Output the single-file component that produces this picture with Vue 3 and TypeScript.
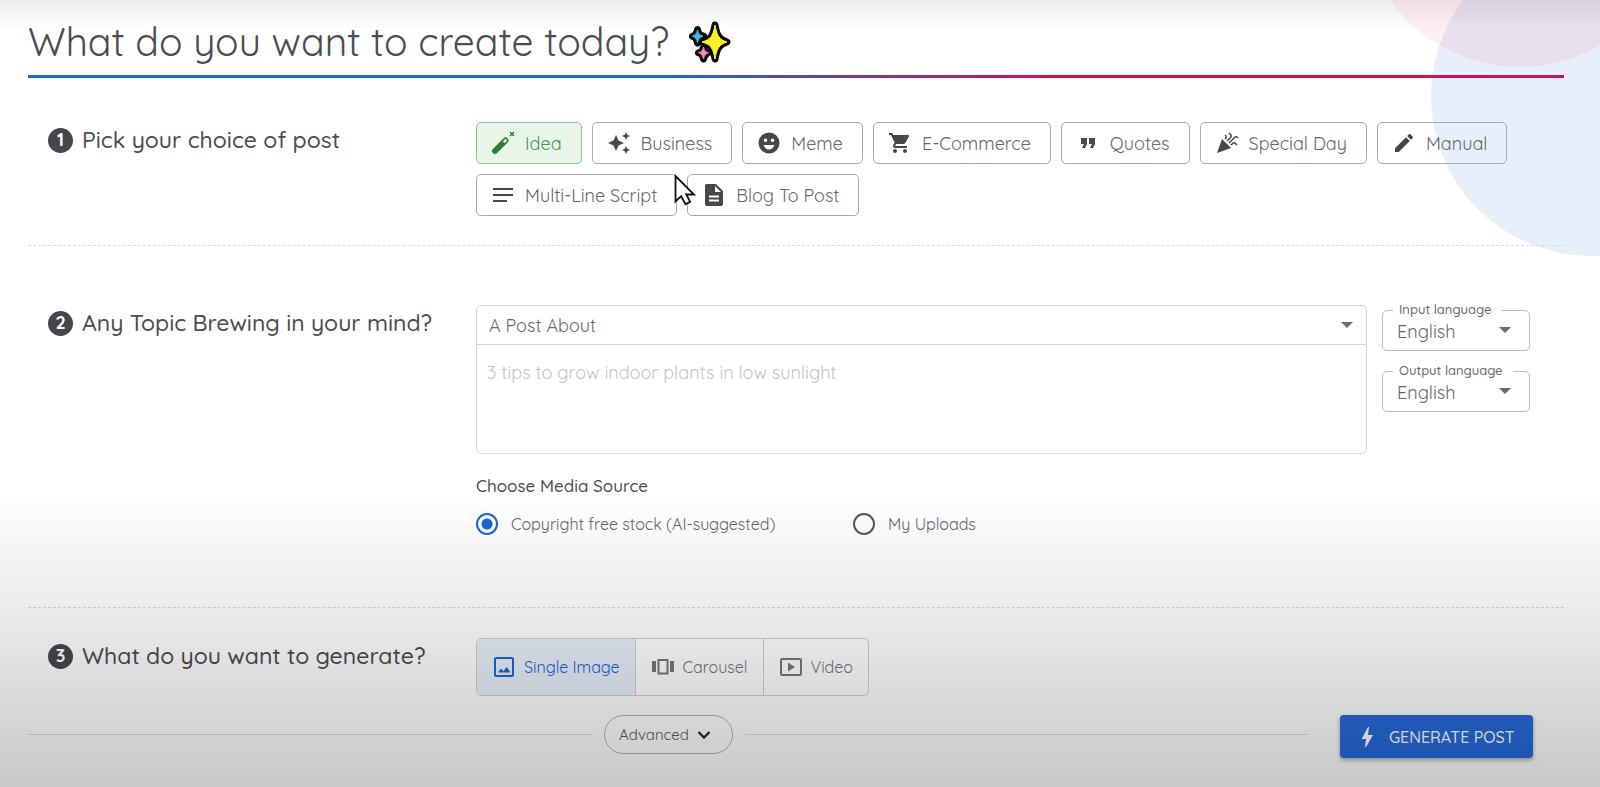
<script setup lang="ts">
import { ref } from 'vue'

interface PostType {
  id: string
  label: string
  paths: string[]
}

const postTypes: PostType[] = [
  { id: 'idea', label: 'Idea', paths: [] },
  {
    id: 'business',
    label: 'Business',
    paths: [
      'M19 9l1.25-2.75L23 5l-2.75-1.25L19 1l-1.25 2.75L15 5l2.75 1.25zM11.5 9.5L9 4 6.5 9.5 1 12l5.5 2.5L9 20l2.5-5.5L17 12zM19 15l-1.25 2.75L15 19l2.75 1.25L19 23l1.25-2.75L23 19l-2.75-1.25z',
    ],
  },
  {
    id: 'meme',
    label: 'Meme',
    paths: [
      'M12 1.5a10.5 10.5 0 1 0 0 21a10.5 10.5 0 1 0 0-21zM8.5 7.5a1.7 1.7 0 0 1 0 3.5a1.7 1.7 0 0 1 0-3.5zM15.5 7.5a1.7 1.7 0 0 1 0 3.5a1.7 1.7 0 0 1 0-3.5zM12 18.5c-2.5 0-4.6-1.8-5.5-4.5h11c-.9 2.7-3 4.5-5.5 4.5z',
    ],
  },
  {
    id: 'ecommerce',
    label: 'E-Commerce',
    paths: [
      'M7 18c-1.1 0-1.99.9-1.99 2S5.9 22 7 22s2-.9 2-2-.9-2-2-2zM1 2v2h2l3.6 7.59-1.35 2.45c-.16.28-.25.61-.25.96 0 1.1.9 2 2 2h12v-2H7.42c-.14 0-.25-.11-.25-.25l.03-.12.9-1.63h7.45c.75 0 1.41-.41 1.75-1.03l3.58-6.49c.08-.14.12-.31.12-.48 0-.55-.45-1-1-1H5.21l-.94-2H1zm16 16c-1.1 0-1.99.9-1.99 2s.89 2 1.99 2 2-.9 2-2-.9-2-2-2z',
    ],
  },
  { id: 'quotes', label: 'Quotes', paths: ['M6 17h3l2-4V7H5v6h3zM14 17h3l2-4V7h-6v6h3z'] },
  {
    id: 'special',
    label: 'Special Day',
    paths: [
      'M2 22l14-5-9-9z',
      'M14.53 12.53l5.59-5.59c.49-.49 1.28-.49 1.77 0l.59.59 1.06-1.06-.59-.59c-1.07-1.07-2.82-1.07-3.89 0l-5.59 5.59 1.06 1.06zM10.06 6.88l-.59.59 1.06 1.06.59-.59c1.07-1.07 1.07-2.82 0-3.89l-.59-.59-1.06 1.07.59.59c.48.48.48 1.28 0 1.76zM17.06 11.88l-1.59 1.59 1.06 1.06 1.59-1.59c.49-.49 1.28-.49 1.77 0l1.61 1.61 1.06-1.06-1.61-1.61c-1.08-1.07-2.82-1.07-3.89 0zM15.06 5.88l-3.59 3.59 1.06 1.06 3.59-3.59c1.07-1.07 1.07-2.82 0-3.89l-1.59-1.59-1.06 1.06 1.59 1.59c.48.49.48 1.29 0 1.77z',
    ],
  },
  {
    id: 'manual',
    label: 'Manual',
    paths: [
      'M3 17.25V21h3.75L17.81 9.94l-3.75-3.75L3 17.25zM20.71 7.04c.39-.39.39-1.02 0-1.41l-2.34-2.34c-.39-.39-1.02-.39-1.41 0l-1.83 1.83 3.75 3.75 1.83-1.83z',
    ],
  },
  { id: 'multiline', label: 'Multi-Line Script', paths: ['M2 5h20v2H2zM2 11h20v2H2zM2 17h14v2H2z'] },
  {
    id: 'blog',
    label: 'Blog To Post',
    paths: [
      'M14 1H5c-1.1 0-2 .9-2 2v18c0 1.1.9 2 2 2h14c1.1 0 2-.9 2-2V8zM17 18.5H7v-2h10zM17 14.5H7v-2h10zM13 9V3l6 6z',
    ],
  },
]

const languages = ['English', 'Spanish', 'French', 'German']
const sources = [
  { id: 'stock', label: 'Copyright free stock (AI-suggested)' },
  { id: 'uploads', label: 'My Uploads' },
]
const formats = [
  { id: 'image', label: 'Single Image' },
  { id: 'carousel', label: 'Carousel' },
  { id: 'video', label: 'Video' },
]

const postType = ref('idea')
const topicKind = ref('A Post About')
const topic = ref('')
const inputLanguage = ref('English')
const outputLanguage = ref('English')
const source = ref('stock')
const format = ref('image')
</script>

<template>
  <main class="page">
    <div class="backdrop" aria-hidden="true">
      <span class="disc disc-blue"></span>
      <span class="disc disc-pink"></span>
    </div>

    <header class="header">
      <h1>What do you want to create today?</h1>
      <svg class="sparkles" viewBox="0 0 42 42" aria-hidden="true">
        <g stroke="#0a0a0a" stroke-width="7" stroke-linejoin="round" fill="#0a0a0a">
          <path d="M8.5 8.5C9.5 13 10.5 14 14.5 15.2C10.5 16.4 9.5 17.5 8.5 22C7.5 17.5 6.5 16.4 3.5 15.2C6.5 14 7.5 13 8.5 8.5z" />
          <path d="M26 4C28 15.5 30.5 18.5 38 21C30.5 23.5 28 26.5 26 38C24 26.5 21.5 23.5 13 21C21.5 18.5 24 15.5 26 4z" />
          <path d="M14.5 26C15.5 30 16.5 31 19 31.8C16.5 32.7 15.5 34 14.5 38C13.5 34 12.5 32.7 9.5 31.8C12.5 31 13.5 30 14.5 26z" />
        </g>
        <g stroke-width="1" stroke-linejoin="round">
          <path fill="#fff02a" stroke="#fff02a" d="M26 4C28 15.5 30.5 18.5 38 21C30.5 23.5 28 26.5 26 38C24 26.5 21.5 23.5 13 21C21.5 18.5 24 15.5 26 4z" />
          <path fill="#35bde9" stroke="#35bde9" d="M8.5 9C9.5 13 10.5 14 14 15.2C10.5 16.4 9.5 17.5 8.5 21.5C7.5 17.5 6.5 16.4 3.5 15.2C6.5 14 7.5 13 8.5 9z" />
          <path fill="#f58bbd" stroke="#f58bbd" d="M14.5 26C15.5 30 16.5 31 19.5 31.8C16.5 32.7 15.5 34 14.5 38C13.5 34 12.5 32.7 9.5 31.8C12.5 31 13.5 30 14.5 26z" />
        </g>
      </svg>
    </header>

    <section class="step step-post">
      <h2><span class="badge">1</span>Pick your choice of post</h2>
      <div class="chips">
        <button
          v-for="t in postTypes"
          :key="t.id"
          type="button"
          class="chip"
          :class="{ active: postType === t.id }"
          :aria-pressed="postType === t.id"
          @click="postType = t.id"
        >
          <svg viewBox="0 0 24 24" aria-hidden="true">
            <template v-if="t.id === 'idea'">
              <path d="M4 20L14.5 9.5" fill="none" stroke="currentColor" stroke-width="6" stroke-linecap="round" />
              <path d="M13.5 10.5l1.2-1.2" fill="none" stroke="#e8f5e9" stroke-width="2.6" stroke-linecap="round" />
              <path d="M19 1l4 4M23 1l-4 4" fill="none" stroke="currentColor" stroke-width="1.5" />
            </template>
            <path v-for="p in t.paths" :key="p" :d="p" fill="currentColor" fill-rule="evenodd" />
          </svg>
          <span>{{ t.label }}</span>
        </button>
        <svg class="pointer" viewBox="0 0 22 32" aria-hidden="true">
          <path d="M1.5 2v25.5l5.7-5.3 4.3 8 4.6-2.4-3.8-7.3h7.7z" fill="#fff" stroke="#111" stroke-width="1.8" />
        </svg>
      </div>
    </section>

    <section class="step step-topic">
      <h2><span class="badge">2</span>Any Topic Brewing in your mind?</h2>
      <div>
        <div class="topic-row">
          <div class="composer">
            <div class="picker">
              <select v-model="topicKind" aria-label="Topic type">
                <option>A Post About</option>
                <option>A Question About</option>
              </select>
              <svg class="caret" viewBox="0 0 12 6" aria-hidden="true"><path d="M0 0h12L6 6z" fill="currentColor" /></svg>
            </div>
            <textarea v-model="topic" aria-label="Topic" placeholder="3 tips to grow indoor plants in low sunlight"></textarea>
          </div>
          <div class="languages">
            <fieldset>
              <legend><label for="input-language">Input language</label></legend>
              <select id="input-language" v-model="inputLanguage">
                <option v-for="l in languages" :key="l">{{ l }}</option>
              </select>
              <svg class="caret" viewBox="0 0 12 6" aria-hidden="true"><path d="M0 0h12L6 6z" fill="currentColor" /></svg>
            </fieldset>
            <fieldset>
              <legend><label for="output-language">Output language</label></legend>
              <select id="output-language" v-model="outputLanguage">
                <option v-for="l in languages" :key="l">{{ l }}</option>
              </select>
              <svg class="caret" viewBox="0 0 12 6" aria-hidden="true"><path d="M0 0h12L6 6z" fill="currentColor" /></svg>
            </fieldset>
          </div>
        </div>
        <h3 id="media-source">Choose Media Source</h3>
        <div class="sources" role="radiogroup" aria-labelledby="media-source">
          <label v-for="s in sources" :key="s.id">
            <input v-model="source" type="radio" name="source" :value="s.id" />
            <span>{{ s.label }}</span>
          </label>
        </div>
      </div>
    </section>

    <section class="step step-format">
      <h2><span class="badge">3</span>What do you want to generate?</h2>
      <div class="formats">
        <button
          v-for="f in formats"
          :key="f.id"
          type="button"
          :class="{ active: format === f.id }"
          :aria-pressed="format === f.id"
          @click="format = f.id"
        >
          <svg viewBox="0 0 24 24" aria-hidden="true">
            <template v-if="f.id === 'image'">
              <rect x="3" y="3" width="18" height="18" rx="1" fill="none" stroke="currentColor" stroke-width="2" />
              <path d="M6 17.5l3-4 2.5 2.8 3.2-4.5 3.8 5.7z" fill="currentColor" />
            </template>
            <template v-else-if="f.id === 'carousel'">
              <path d="M1 6h4v11H1zM19 6h4v11h-4z" fill="currentColor" />
              <rect x="7.5" y="5" width="9" height="13.5" fill="none" stroke="currentColor" stroke-width="2" />
            </template>
            <template v-else>
              <rect x="2" y="4" width="20" height="16" rx="1" fill="none" stroke="currentColor" stroke-width="2" />
              <path d="M9 7.5v9l7-4.5z" fill="currentColor" />
            </template>
          </svg>
          <span>{{ f.label }}</span>
        </button>
      </div>
    </section>

    <footer class="footer">
      <div class="more">
        <span class="rule"></span>
        <button type="button" class="advanced">
          Advanced
          <svg viewBox="0 0 14 10" aria-hidden="true"><path d="M1.5 2l5.5 5.5L12.5 2" fill="none" stroke="#2b2c2f" stroke-width="2.4" /></svg>
        </button>
        <span class="rule"></span>
      </div>
      <button type="button" class="generate">
        <svg viewBox="0 0 24 24" aria-hidden="true"><path d="M11 22h-1l1-8H6.5l6.5-12h1l-1 8h5z" fill="currentColor" /></svg>
        Generate Post
      </button>
    </footer>
    <div class="shade" aria-hidden="true"></div>
  </main>
</template>

<style>
body {
  margin: 0;
}
</style>

<style scoped>
.page {
  position: relative;
  box-sizing: border-box;
  min-height: 100vh;
  padding: 16px 36px 29px 28px;
  background: #fff;
  color: #4b4d51;
  font-family: Quicksand, Lato, 'Open Sans', sans-serif;
  font-size: 18px;
}

.page *,
.page *::before {
  box-sizing: border-box;
}

.backdrop,
.shade {
  position: absolute;
  inset: 0;
  overflow: hidden;
  pointer-events: none;
}

.shade {
  background:
    linear-gradient(180deg, rgba(0, 0, 0, 0.07), rgba(0, 0, 0, 0) 30px),
    linear-gradient(180deg, rgba(0, 0, 0, 0) 490px, rgba(0, 0, 0, 0.07) 600px, rgba(0, 0, 0, 0.14) 690px, rgba(0, 0, 0, 0.21) 787px);
}

.disc {
  position: absolute;
  width: 320px;
  height: 320px;
  border-radius: 50%;
}

.disc-blue {
  top: -64px;
  right: -151px;
  background: #e8effa;
}

.disc-pink {
  top: -253px;
  right: -80px;
  background: rgba(245, 50, 110, 0.08);
}

.header,
.step,
.footer {
  position: relative;
}

.header {
  display: flex;
  align-items: center;
  gap: 20px;
  height: 62px;
  padding-bottom: 10px;
}

.header::after {
  content: '';
  position: absolute;
  inset: auto 0 0;
  height: 3px;
  background: linear-gradient(90deg, #1b66cf 42%, #c5174c 66%);
}

h1,
h2,
h3 {
  margin: 0;
  font-weight: 500;
}

h1 {
  font-size: 39px;
  line-height: 52px;
  font-weight: 400;
}

.sparkles {
  width: 42px;
  height: 42px;
}

.step {
  display: grid;
  grid-template-columns: 448px minmax(0, 1fr);
}

h2 {
  display: flex;
  align-items: center;
  align-self: start;
  gap: 9px;
  padding: 2px 0 0 20px;
  font-size: 23px;
  line-height: 32px;
}

.badge {
  display: grid;
  place-items: center;
  width: 25px;
  height: 25px;
  border-radius: 50%;
  background: #45474b;
  color: #fff;
  font-size: 18px;
  line-height: 24px;
  font-weight: 700;
}

button,
select,
textarea {
  font: inherit;
  color: inherit;
}

button {
  cursor: pointer;
}

.step-post {
  padding: 44px 0 29px;
  border-bottom: 1px dashed #dadad6;
}

.chips {
  position: relative;
  display: flex;
  flex-wrap: wrap;
  gap: 10px;
}

.chip {
  display: flex;
  align-items: center;
  gap: 10px;
  height: 42px;
  padding: 0 19px 0 14px;
  border: 1px solid #a9aaac;
  border-radius: 5px;
  background: transparent;
  color: #45474b;
}

.chip span {
  color: #66686c;
}

.chip svg {
  width: 24px;
  height: 24px;
}

.chip.active {
  border-color: #8cc391;
  background: #e8f5e9;
  color: #2e7d32;
}

.chip.active span {
  color: #4a9650;
}

.chips .pointer {
  position: absolute;
  top: 52px;
  left: 198px;
  width: 22px;
  height: 32px;
}

.step-topic {
  padding: 59px 0 72px;
  border-bottom: 1px dashed #dadad6;
}

.topic-row {
  display: flex;
  gap: 15px;
  padding-right: 34px;
}

.composer {
  flex: 1;
  height: 149px;
  border: 1px solid #d6d6d6;
  border-radius: 5px;
}

.picker {
  position: relative;
  border-bottom: 1px solid #d6d6d6;
}

select {
  width: 100%;
  border: 0;
  outline: 0;
  background: transparent;
  color: #66686c;
  appearance: none;
}

.picker select {
  height: 38px;
  padding: 0 12px;
}

.caret {
  position: absolute;
  top: 16px;
  right: 13px;
  width: 12px;
  height: 6px;
  color: #6b6b6b;
  pointer-events: none;
}

textarea {
  display: block;
  width: 100%;
  height: 107px;
  padding: 16px 10px;
  border: 0;
  outline: 0;
  background: transparent;
  line-height: 24px;
  resize: none;
}

textarea::placeholder {
  color: #c4c4c4;
  opacity: 1;
}

.languages {
  display: grid;
  gap: 15px;
  align-content: start;
  width: 148px;
}

fieldset {
  position: relative;
  min-width: 0;
  height: 46px;
  margin: 0;
  padding: 0;
  border: 1px solid #bdbdbd;
  border-radius: 5px;
}

legend {
  height: 10px;
  margin-left: 10px;
  padding: 0 10px 0 6px;
  font-size: 13px;
  line-height: 8px;
  font-weight: 500;
  color: #66686c;
}

fieldset select {
  display: block;
  height: 32px;
  padding: 0 14px;
}

fieldset .caret {
  top: 12px;
  right: 18px;
}

h3 {
  margin-top: 20px;
  font-size: 17px;
  line-height: 24px;
}

.sources {
  display: grid;
  grid-template-columns: 377px 1fr;
  margin-top: 15px;
}

.sources label {
  display: flex;
  align-items: center;
  gap: 13px;
  line-height: 22px;
  font-size: 16px;
  color: #66686c;
}

.sources input {
  width: 22px;
  height: 22px;
  margin: 0;
  border: 2px solid #55565a;
  border-radius: 50%;
  appearance: none;
}

.sources input:checked {
  border-color: #1b66d6;
  background: radial-gradient(circle, #1b66d6 5px, transparent 6px);
}

.step-format {
  padding-top: 30px;
}

.formats {
  display: flex;
  justify-self: start;
  border: 1px solid #d0d1d3;
  border-radius: 5px;
  overflow: hidden;
}

.formats button {
  display: flex;
  align-items: center;
  gap: 8px;
  height: 56px;
  padding: 0 15px;
  border: 0;
  background: transparent;
  color: #77787a;
  font-size: 16px;
}

.formats button + button {
  border-left: 1px solid #d0d1d3;
}

.formats .active {
  background: #e8effa;
  color: #1d66d6;
}

.formats svg {
  width: 24px;
  height: 24px;
}

.footer {
  display: flex;
  align-items: flex-start;
  gap: 32px;
  margin-top: 19px;
  padding-right: 31px;
}

.more {
  display: flex;
  flex: 1;
  align-items: center;
  gap: 12px;
}

.rule {
  flex: 1;
  height: 1px;
  background: #dedede;
}

.advanced {
  display: flex;
  align-items: center;
  justify-content: center;
  gap: 8px;
  width: 129px;
  height: 39px;
  padding: 0 6px 0 0;
  border: 1px solid #b5b5b5;
  border-radius: 20px;
  background: transparent;
  color: #5b5d61;
  font-size: 15px;
}

.advanced svg {
  width: 14px;
  height: 10px;
}

.generate {
  display: flex;
  align-items: center;
  gap: 10px;
  width: 193px;
  height: 43px;
  padding: 0 0 0 15px;
  border: 0;
  border-radius: 4px;
  background: #266adb;
  box-shadow: 0 2px 4px rgba(0, 0, 0, 0.35);
  color: #fff;
  font-size: 16px;
  font-weight: 500;
  text-transform: uppercase;
  white-space: nowrap;
}

.generate svg {
  flex: none;
  width: 24px;
  height: 24px;
}
</style>
